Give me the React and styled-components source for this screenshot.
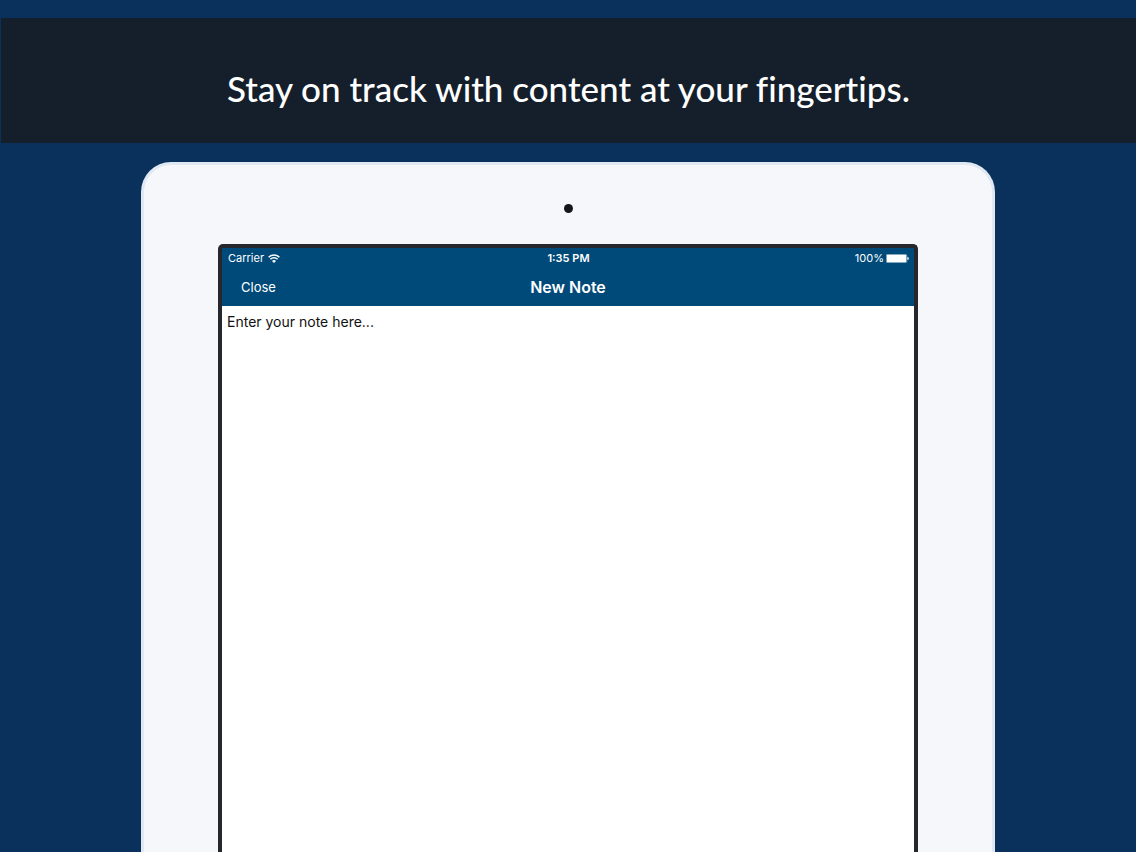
import React from "react";
import styled, { createGlobalStyle } from 'styled-components';

const GlobalStyle = createGlobalStyle`
	*, *::before, *::after {
		box-sizing: border-box;
	}

	body {
		margin: 0;
		background-color: #09315b;
		font-family: Inter, "Liberation Sans", sans-serif;
	}
`

const Page = styled.main`
	display: flex;
	flex-direction: column;
	height: 100vh;
	padding-top: 18px;
	overflow: hidden;
`

const Banner = styled.header`
	display: flex;
	justify-content: center;
	align-items: center;
	flex: none;
	margin-left: 1px;
	padding: 46px 16px 31px;
	background-color: #141f2b;
`

const Headline = styled.h1`
	margin: 0;
	font-family: Lato, "Open Sans", sans-serif;
	font-size: 35px;
	font-weight: 500;
	font-variant-ligatures: none;
	line-height: 48px;
	text-align: center;
	color: #fff;
`

const Tablet = styled.section`
	display: flex;
	flex-direction: column;
	flex: 1;
	width: 100%;
	max-width: 854px;
	margin: 19px auto 0;
	padding: 0 74px;
	border: 3px solid #dfe8f3;
	border-bottom: 0;
	border-radius: 30px 30px 0 0;
	background-color: #f6f7fb;
`

const Camera = styled.div`
	flex: none;
	width: 9px;
	height: 9px;
	margin: 39px auto 31px;
	border-radius: 50%;
	background-color: #15161a;
`

const Screen = styled.div`
	display: flex;
	flex-direction: column;
	flex: 1;
	border: 4px solid #26272d;
	border-bottom: 0;
	border-radius: 5px 5px 0 0;
	background-color: #fff;
`

const Bar = styled.div`
	display: grid;
	grid-template-columns: 1fr auto 1fr;
	align-items: center;
	height: ${({ $height }) => $height};
	padding: ${({ $padding }) => $padding};
	color: #fff;
	background-color: #004a79;
`

const Status = styled.span`
	display: flex;
	align-items: center;
	justify-content: ${({ $align }) => $align || 'flex-start'};
	gap: ${({ $gap }) => $gap || '0'};
	font-size: 11px;
	font-weight: ${({ $bold }) => $bold ? 600 : 400};
	line-height: 16px;
`

const CloseButton = styled.button`
	justify-self: start;
	padding: 0;
	border: 0;
	font: inherit;
	font-size: 13px;
	line-height: 20px;
	color: inherit;
	background: none;
	cursor: pointer;
`

const Title = styled.h2`
	margin: 0;
	font-size: 16px;
	font-weight: 600;
	line-height: 20px;
`

const NoteInput = styled.textarea`
	display: block;
	flex: 1;
	width: 100%;
	padding: 6px 5px;
	border: 0;
	outline: 0;
	resize: none;
	font: inherit;
	font-size: 14px;
	line-height: 20px;
	color: #111;
	background-color: #fff;
`

function WifiIcon() {

	return (
		<svg width="12" height="9" viewBox="0 0 12 9" fill="none" stroke="#fff" aria-hidden="true">
			<path d="M0.6 3.2a7.7 7.7 0 0 1 10.8 0" strokeWidth="1.5" />
			<path d="M2.4 5.3a5.1 5.1 0 0 1 7.2 0" strokeWidth="1.5" />
			<path d="M6 9 4 6.9a2.8 2.8 0 0 1 4 0z" fill="#fff" stroke="none" />
		</svg>
	)

}

function BatteryIcon() {

	return (
		<svg width="23" height="9" viewBox="0 0 23 9" fill="#fff" aria-hidden="true">
			<rect x="0.25" y="0.25" width="20.5" height="8.5" rx="1.5" fill="none" stroke="#fff" strokeWidth="0.5" />
			<rect x="0.8" y="0.8" width="19.4" height="7.4" rx="0.8" />
			<path d="M21.4 3c1 .3 1.4.8 1.4 1.5s-.4 1.2-1.4 1.5z" />
		</svg>
	)

}

export default function App() {

	return (
		<>
			<GlobalStyle />
			<Page>
				<Banner>
					<Headline>Stay on track with content at your fingertips.</Headline>
				</Banner>
				<Tablet>
					<Camera />
					<Screen>
						<Bar $height="20px" $padding="0 5px 0 6px">
							<Status $gap="4px">Carrier <WifiIcon /></Status>
							<Status $bold>1:35 PM</Status>
							<Status $align="flex-end" $gap="2px">100% <BatteryIcon /></Status>
						</Bar>
						<Bar $height="38px" $padding="0 19px">
							<CloseButton type="button">Close</CloseButton>
							<Title>New Note</Title>
						</Bar>
						<NoteInput aria-label="Note" defaultValue="Enter your note here..." />
					</Screen>
				</Tablet>
			</Page>
		</>
	)

}
